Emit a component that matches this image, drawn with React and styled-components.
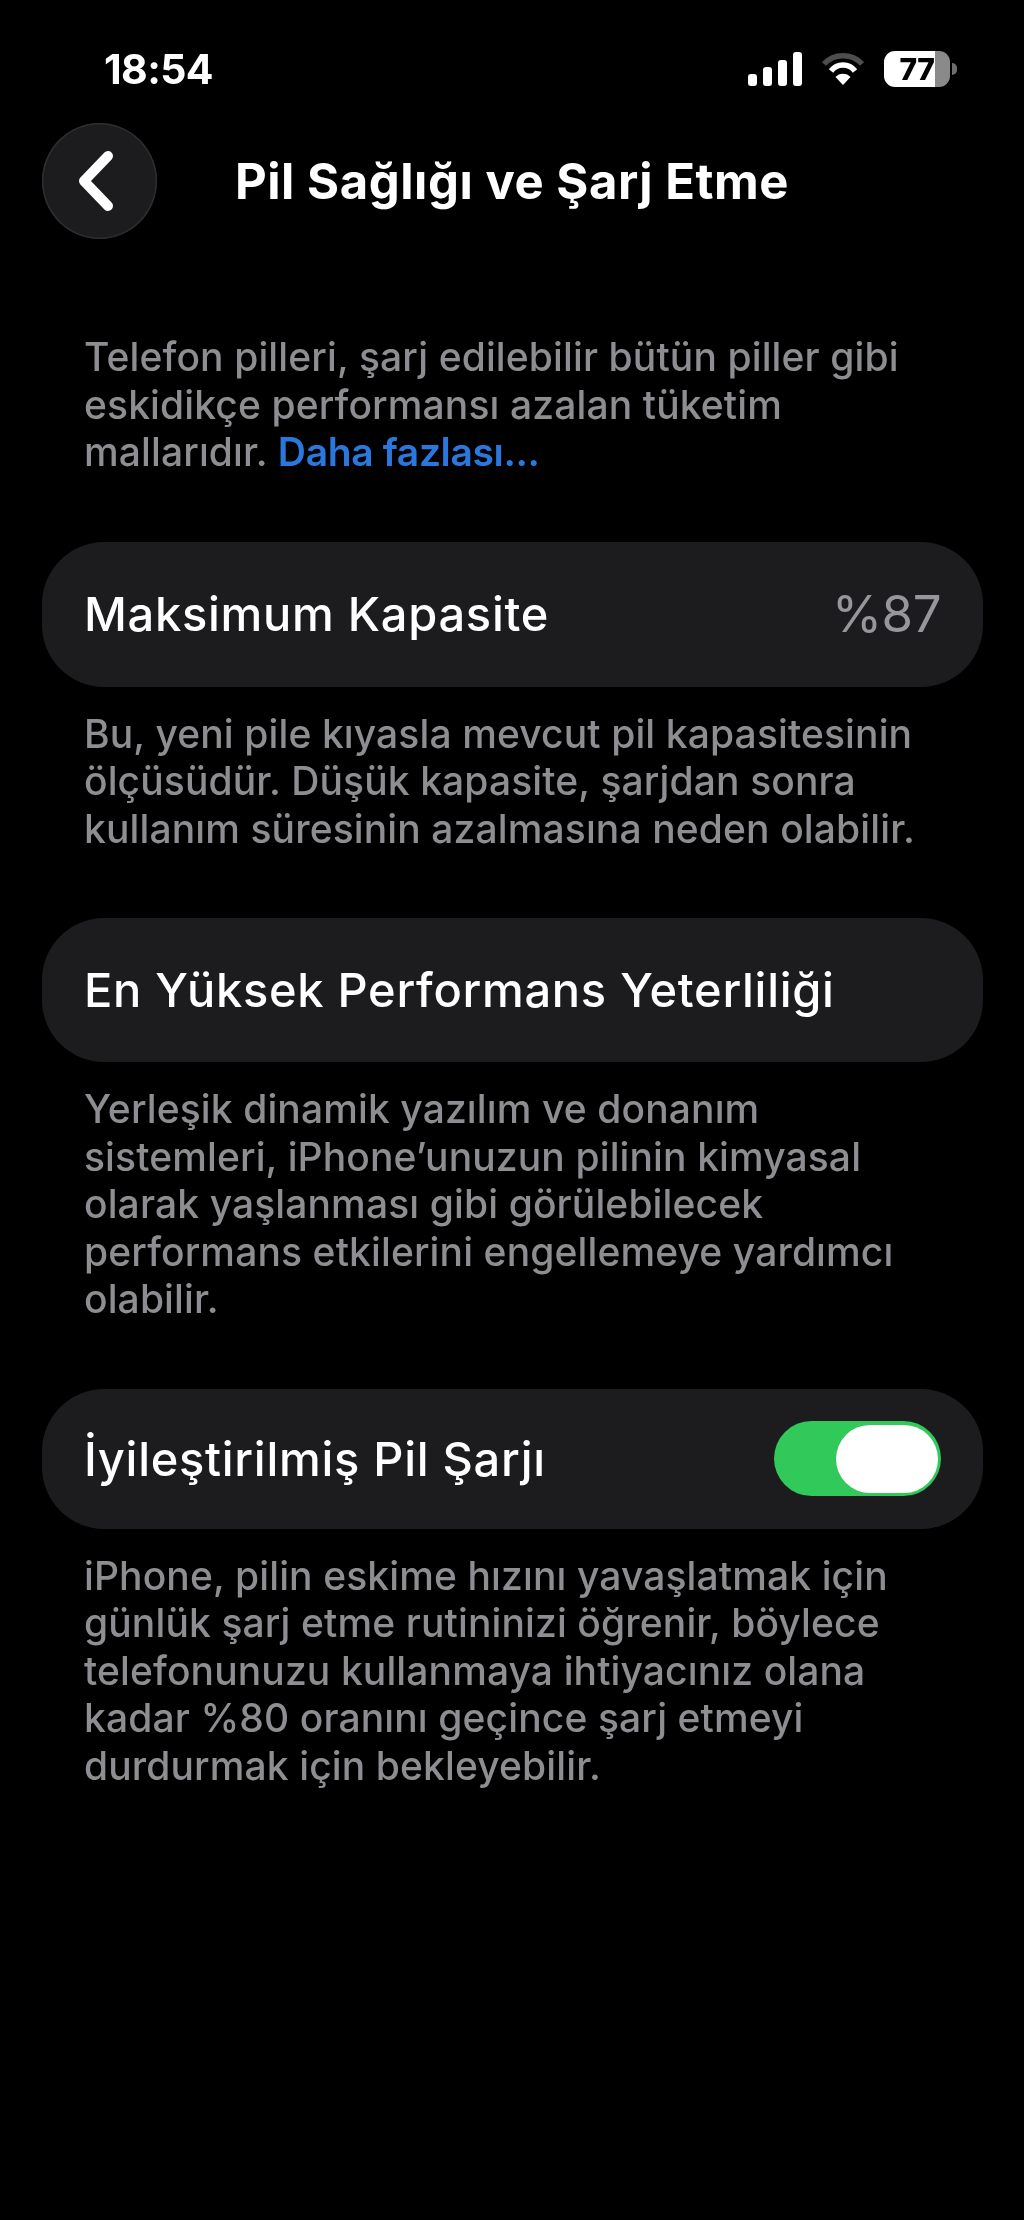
import React from "react";
import styled, { createGlobalStyle } from "styled-components";

const Global = createGlobalStyle`
  html, body { margin: 0; padding: 0; background: #000; }
  body { font-family: Inter, "Liberation Sans", sans-serif; -webkit-font-smoothing: antialiased; }
`;

const Screen = styled.div`
  width: 1024px;
  height: 2220px;
  background: #000;
  overflow: hidden;
  filter: blur(0.7px);
`;

const StatusBar = styled.div`
  height: 123px;
  box-sizing: border-box;
  padding: 48px 67px 0 104px;
  display: flex;
  justify-content: space-between;
  align-items: flex-start;
`;

const Time = styled.div`
  color: #fff;
  font-size: 41px;
  line-height: 42px;
  font-weight: 700;
  letter-spacing: -0.6px;
`;

const StatusIcons = styled.div`
  display: flex;
  align-items: center;
  gap: 20px;
  margin-top: 3px;
`;

const Battery = styled.div`
  position: relative;
  width: 66px;
  height: 36px;
  border-radius: 11px;
  overflow: hidden;
  background: linear-gradient(90deg, #fff 0 77%, #8a8a8a 77% 100%);
  color: #000;
  font-size: 30px;
  line-height: 36px;
  font-weight: 800;
  text-align: center;
  letter-spacing: -0.5px;
`;

const BatteryWrap = styled.div`
  display: flex;
  align-items: center;
  gap: 2px;
`;

const BatteryTip = styled.div`
  width: 5px;
  height: 12px;
  background: #6e6e6e;
  border-radius: 0 6px 6px 0;
`;

const Nav = styled.div`
  display: grid;
  grid-template-columns: 115px 1fr 115px;
  align-items: center;
  padding: 0 42px;
  height: 116px;
`;

const BackButton = styled.div`
  width: 115px;
  height: 116px;
  box-sizing: border-box;
  padding-right: 8px;
  border-radius: 50%;
  background: #1c1c1e;
  box-shadow: inset 0 0 0 1.5px #2e2e30;
  display: flex;
  align-items: center;
  justify-content: center;
`;

const Title = styled.div`
  color: #fff;
  font-size: 49px;
  line-height: 56px;
  font-weight: 700;
  text-align: center;
  letter-spacing: 0.55px;
  margin-top: 2px;
  white-space: nowrap;
`;

const Content = styled.div`
  padding: 94px 41px 0 42px;
  display: flex;
  flex-direction: column;
`;

const Note = styled.p`
  margin: 0 0 66px;
  padding-left: 42px;
  color: #8e8e92;
  font-size: 39px;
  line-height: 47.5px;
  font-weight: 500;
  letter-spacing: 0.12px;
  white-space: nowrap;
`;

const Link = styled.span`
  color: #2a78de;
  font-weight: 600;
  letter-spacing: -0.35px;
`;

const Card = styled.div`
  background: #1c1c1e;
  border-radius: 62px;
  height: ${(p) => p.$h}px;
  box-sizing: border-box;
  padding: 0 42px;
  margin-bottom: 23px;
  display: flex;
  align-items: center;
  justify-content: space-between;
`;

const Label = styled.div`
  color: #fff;
  font-size: 47px;
  line-height: 56px;
  font-weight: 550;
  letter-spacing: 0.72px;
  white-space: nowrap;
`;

const Value = styled.div`
  color: #96969b;
  font-size: 51px;
  line-height: 56px;
  font-weight: 400;
  letter-spacing: -0.5px;
`;

const Switch = styled.div`
  width: 167px;
  height: 75px;
  border-radius: 38px;
  background: #30c95a;
  display: flex;
  align-items: center;
  justify-content: flex-end;
  padding-right: 3px;
  box-sizing: border-box;
`;

const Knob = styled.div`
  width: 102px;
  height: 68px;
  border-radius: 34px;
  background: #fff;
`;

export default function App() {
  return (
    <Screen>
      <Global />
      <StatusBar>
        <Time>18:54</Time>
        <StatusIcons>
          <svg width="54" height="34" viewBox="0 0 54 34" fill="#fff">
            <rect x="0" y="22" width="9" height="12" rx="3" />
            <rect x="15" y="15" width="9" height="19" rx="3" />
            <rect x="30" y="8" width="9" height="26" rx="3" />
            <rect x="45" y="0" width="9" height="34" rx="3" />
          </svg>
          <svg width="42" height="34" viewBox="0 0 42 34" fill="none" strokeLinecap="butt">
            <path d="M2 12 C12 1 30 1 40 12" stroke="#4d4d4d" strokeWidth="5.5" />
            <path d="M9 19 C15 11 27 11 33 19" stroke="#fff" strokeWidth="5.5" />
            <path d="M21 33 L13.5 25 C17 20.5 25 20.5 28.5 25 Z" fill="#fff" />
          </svg>
          <BatteryWrap>
            <Battery>77</Battery>
            <BatteryTip />
          </BatteryWrap>
        </StatusIcons>
      </StatusBar>
      <Nav>
        <BackButton>
          <svg width="38" height="60" viewBox="0 0 38 60" fill="none">
            <path d="M31 5 L7 30 L31 55" stroke="#fff" strokeWidth="10" strokeLinecap="round" strokeLinejoin="round" />
          </svg>
        </BackButton>
        <Title>Pil Sağlığı ve Şarj Etme</Title>
      </Nav>
      <Content>
        <Note>
          Telefon pilleri, şarj edilebilir bütün piller gibi<br />
          eskidikçe performansı azalan tüketim<br />
          mallarıdır. <Link>Daha fazlası...</Link>
        </Note>
        <Card $h={145}>
          <Label>Maksimum Kapasite</Label>
          <Value>%87</Value>
        </Card>
        <Note>
          Bu, yeni pile kıyasla mevcut pil kapasitesinin<br />
          ölçüsüdür. Düşük kapasite, şarjdan sonra<br />
          kullanım süresinin azalmasına neden olabilir.
        </Note>
        <Card $h={144}>
          <Label>En Yüksek Performans Yeterliliği</Label>
        </Card>
        <Note>
          Yerleşik dinamik yazılım ve donanım<br />
          sistemleri, iPhone’unuzun pilinin kimyasal<br />
          olarak yaşlanması gibi görülebilecek<br />
          performans etkilerini engellemeye yardımcı<br />
          olabilir.
        </Note>
        <Card $h={140}>
          <Label>İyileştirilmiş Pil Şarjı</Label>
          <Switch>
            <Knob />
          </Switch>
        </Card>
        <Note>
          iPhone, pilin eskime hızını yavaşlatmak için<br />
          günlük şarj etme rutininizi öğrenir, böylece<br />
          telefonunuzu kullanmaya ihtiyacınız olana<br />
          kadar %80 oranını geçince şarj etmeyi<br />
          durdurmak için bekleyebilir.
        </Note>
      </Content>
    </Screen>
  );
}
